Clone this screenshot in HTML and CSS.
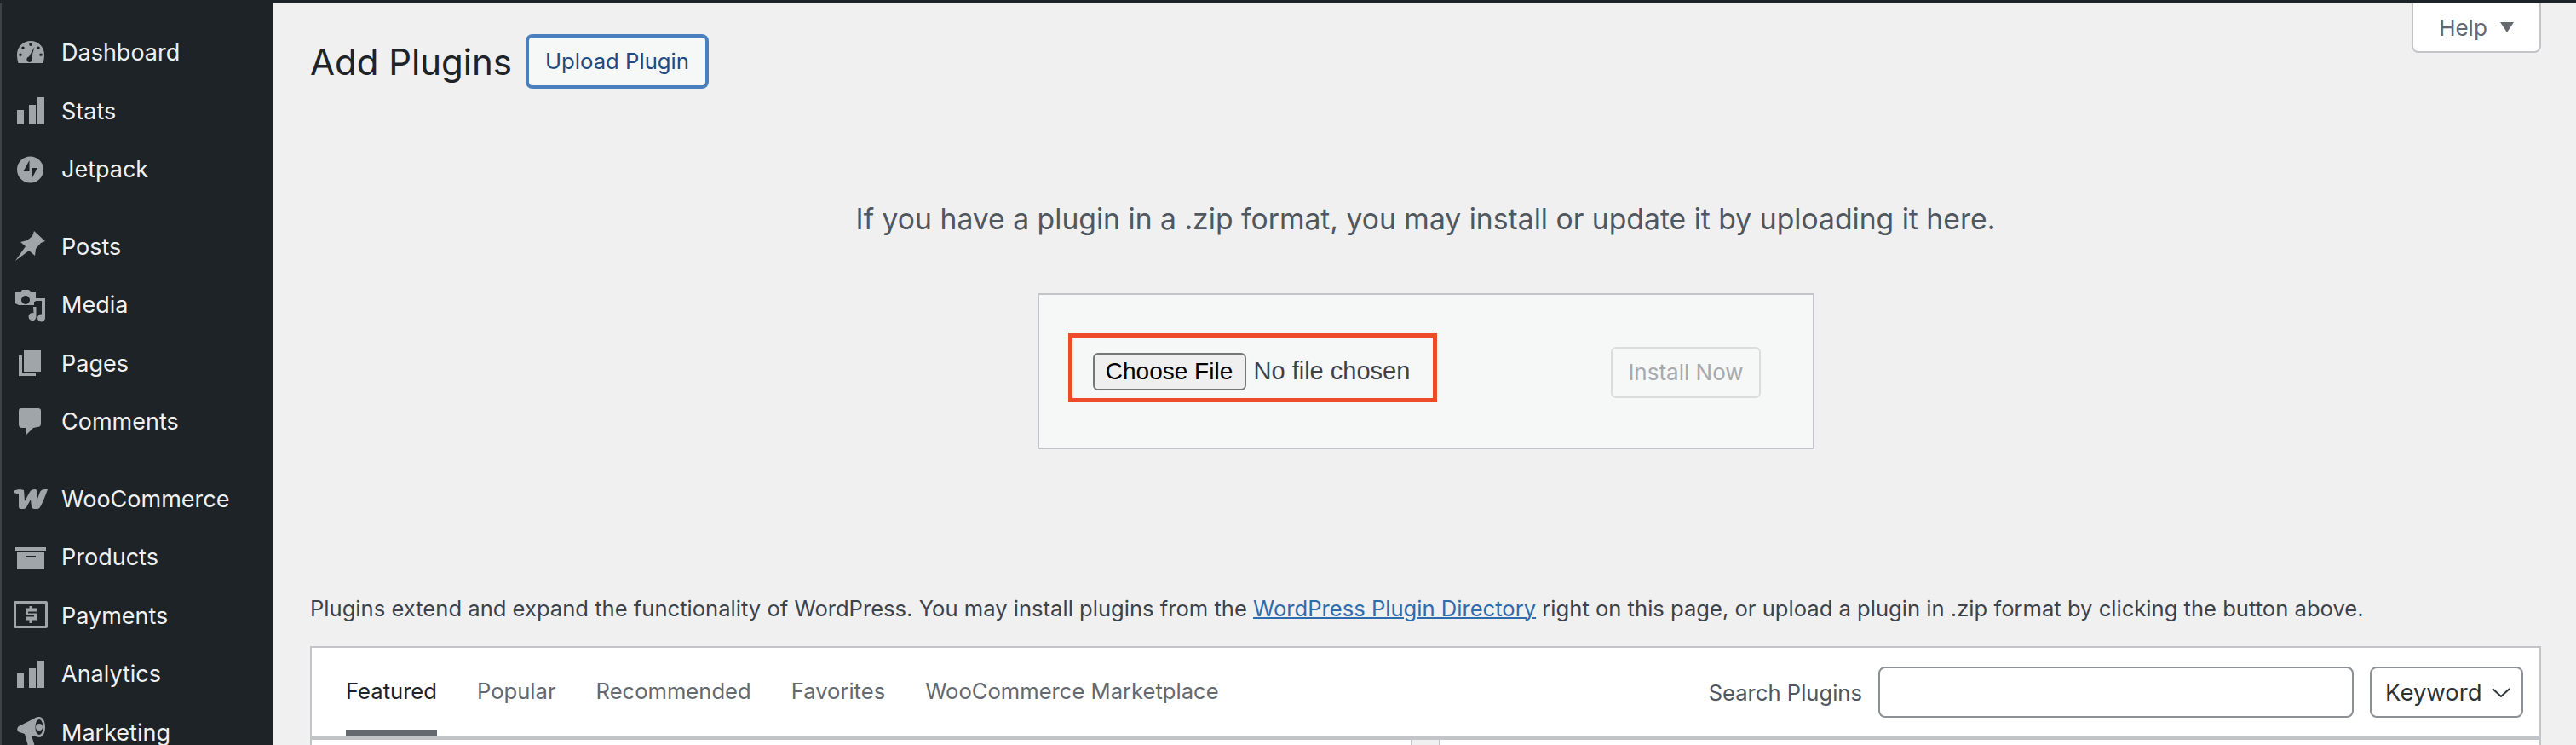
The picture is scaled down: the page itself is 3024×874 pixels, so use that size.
FILE: index.html
```html
<!DOCTYPE html>
<html lang="en">
<head>
  <meta charset="UTF-8">
  <meta name="viewport" content="width=device-width, initial-scale=1.0">
  <title>Add Plugins</title>
  <link rel="stylesheet" href="styles.css">
</head>
<body>
  <div class="topbar"></div>
  <div class="wrap">
    <nav class="sidebar">
      <ul class="menu">
        <li><svg class="icon" viewBox="0 0 40 40"><path fill-rule="evenodd" d="M20 6C11 6 4 13 4 22c0 4 .6 7 1.500 10h29c.9-3 1.500-6 1.500-10 0-9-7-16-16-16zM20 8.500a1.800 1.800 0 1 1 0 3.600 1.800 1.800 0 0 1 0-3.600zM11 12.500a1.800 1.800 0 1 1 0 3.600 1.800 1.800 0 0 1 0-3.600zM29 12.500a1.800 1.800 0 1 1 0 3.600 1.800 1.800 0 0 1 0-3.600zM8 20.500a1.800 1.800 0 1 1 0 3.600 1.800 1.800 0 0 1 0-3.600zM32 20.500a1.800 1.800 0 1 1 0 3.600 1.800 1.800 0 0 1 0-3.600zM24.500 13l-3.500 12.300a3.300 3.300 0 1 1-3-.9z"/></svg>Dashboard</li>
        <li><svg class="icon" viewBox="0 0 40 40"><path d="M4 19h8v17H4zM18 13h8v23h-8zM28 4h8v32h-8z"/></svg>Stats</li>
        <li><svg class="icon" viewBox="0 0 40 40"><path fill-rule="evenodd" d="M19.500 4.500a15.500 15.500 0 1 0 0 31 15.500 15.500 0 0 0 0-31zM18.500 9v13h-7zM21 31V18h7z"/></svg>Jetpack</li>
        <li class="sep"><svg class="icon" viewBox="0 0 40 40"><path d="M24 2l13 12-5 2-6 7-1 8-7-6L2 37l12-17-6-5 8-2 6-5z"/></svg>Posts</li>
        <li><svg class="icon" viewBox="0 0 40 40"><path fill-rule="evenodd" d="M2 5h6l2-3h8l3 3h5v10l-1 1-1 0v4H6L2 18zM14 9a5 5 0 1 0 0 10 5 5 0 0 0 0-10z"/><path d="M25 12h12v23a4.500 4.500 0 1 1-4-4.500V15h-8zM23 22h3.500v11.500a4.500 4.500 0 1 1-3-4.200z"/></svg>Media</li>
        <li><svg class="icon" viewBox="0 0 40 40"><path d="M12 5h20v25H12zM6 11h4v20h16v4H6z"/></svg>Pages</li>
        <li><svg class="icon" viewBox="0 0 40 40"><path d="M9 4h20a3 3 0 0 1 3 3v15a4 4 0 0 1-4 4l-5 1-9 9v-9H10a4 4 0 0 1-4-4V7a3 3 0 0 1 3-3z"/></svg>Comments</li>
        <li class="sep"><svg class="icon" viewBox="0 0 40 40"><path d="M0 11c3-2 9-2 12-1l1 13 6-11c1-2 3-3 6-3 2 0 2 1 2 3v11l4-11c1-2 3-3 6-3h3c-3 8-6 16-9 21-1 2-3 2-5 2s-4 0-5-2l-1-9-5 9c-1 2-3 2-5 2s-4 0-4-3L6 14c-3 0-6 0-6-3z"/></svg>WooCommerce</li>
        <li><svg class="icon" viewBox="0 0 40 40"><path fill-rule="evenodd" d="M2 8h36v4H2zM4 13h32v21H4zM14 18v2h12v-2z"/></svg>Products</li>
        <li><svg class="icon" viewBox="0 0 40 40"><path fill-rule="evenodd" d="M2 3h36a2 2 0 0 1 2 2v28a2 2 0 0 1-2 2H2a2 2 0 0 1-2-2V5a2 2 0 0 1 2-2zM3 7v25h34V7z"/><path d="M18.500 9h3v2.500H27v4H17v2h10v8h-5.500V29h-3v-3.500H14v-4h10v-2H14v-8h4.500z"/></svg>Payments</li>
        <li><svg class="icon" viewBox="0 0 40 40"><path d="M4 19h8v17H4zM18 13h8v23h-8zM28 4h8v32h-8z"/></svg>Analytics</li>
        <li><svg class="icon" viewBox="0 0 40 40"><path fill-rule="evenodd" d="M30 2c4.500 0 7 5.500 7 12s-2.500 12-7 12l-9-2 5 16h-8l-5-18-6-2c-3.500-1-3.500-5-1-7L24 4c2-1.500 4-2 6-2zM30 5c-2.500 0-4.500 4-4.500 9s2 9 4.500 9 4.500-4 4.500-9-2-9-4.500-9zM30 10a4 4 0 1 0 0 8 4 4 0 0 0 0-8z"/></svg>Marketing</li>
      </ul>
    </nav>
    <main class="content">
      <div class="help-tab">Help<span class="help-arrow"></span></div>
      <div class="page-head">
        <h1>Add Plugins</h1>
        <a class="upload-btn" href="#">Upload Plugin</a>
      </div>
      <section class="upload">
        <p class="upload-text">If you have a plugin in a .zip format, you may install or update it by uploading it here.</p>
        <form class="upload-form">
          <div class="file-mark"><input type="file" class="file-input"></div>
          <button type="button" class="install-btn" disabled>Install Now</button>
        </form>
      </section>
      <p class="desc">Plugins extend and expand the functionality of WordPress. You may install plugins from the <a href="#">WordPress Plugin Directory</a> right on this page, or upload a plugin in .zip format by clicking the button above.</p>
      <div class="filter-bar">
        <ul class="tabs">
          <li class="current">Featured</li>
          <li>Popular</li>
          <li>Recommended</li>
          <li>Favorites</li>
          <li>WooCommerce Marketplace</li>
        </ul>
        <form class="search">
          <label for="s">Search Plugins</label>
          <input type="search" id="s" class="search-input">
          <div class="keyword">Keyword<svg viewBox="0 0 22 11"><path d="M1 1l10 9 10-9" fill="none" stroke="#2c3338" stroke-width="2"/></svg></div>
        </form>
      </div>
      <div class="cards">
        <div class="card"></div>
        <div class="card"></div>
      </div>
    </main>
  </div>
</body>
</html>
```

FILE: styles.css
```css
html, body {
  margin: 0;
  height: 874px;
  overflow: hidden;
}
body {
  background: #f0f0f1;
  color: #1d2327;
  font-family: Inter, "Liberation Sans", sans-serif;
  font-size: 28px;
}
.topbar {
  height: 4px;
  background: #1d2327;
}
.wrap {
  display: flex;
  height: 870px;
}
.sidebar {
  width: 318px;
  flex: none;
  background: #1d2327;
  border-left: 2px solid #3c4246;
}
.menu {
  list-style: none;
  margin: 0;
  padding: 23.500px 0 0;
}
.menu li {
  display: flex;
  align-items: center;
  height: 68.500px;
  color: #f0f0f1;
  font-size: 27px;
  gap: 16px;
  padding-left: 14px;
}
.menu li.sep {
  margin-top: 22px;
}
.icon {
  width: 40px;
  height: 40px;
  flex: none;
  fill: #a0a5aa;
}
.content {
  position: relative;
  flex: 1;
  padding: 0 41px 0 44px;
}
.help-tab {
  position: absolute;
  top: 0;
  right: 41px;
  width: 148px;
  height: 56px;
  display: flex;
  align-items: center;
  justify-content: center;
  gap: 15px;
  background: #fff;
  border: 2px solid #c3c4c7;
  border-top: 0;
  border-radius: 0 0 8px 8px;
  color: #646970;
  font-size: 26px;
}
.help-arrow {
  width: 0;
  height: 0;
  border-left: 8px solid transparent;
  border-right: 8px solid transparent;
  border-top: 12px solid #646970;
}
.page-head {
  display: flex;
  align-items: center;
  gap: 16px;
  padding-top: 36px;
}
h1 {
  margin: 0;
  font-size: 42px;
  font-weight: 400;
  line-height: 63px;
}
.upload-btn {
  display: block;
  width: 207px;
  height: 56px;
  line-height: 56px;
  text-align: center;
  background: #f6f7f7;
  border: 4px solid #4a7fbe;
  border-radius: 8px;
  color: #1f4b7f;
  font-size: 25.700px;
  text-decoration: none;
}
.upload {
  display: flex;
  flex-direction: column;
  align-items: center;
}
.upload-text {
  margin: 127px 0 0;
  font-size: 33.700px;
  line-height: 52px;
  color: #50575e;
}
.upload-form {
  box-sizing: border-box;
  width: 912px;
  height: 183px;
  margin-top: 61px;
  display: flex;
  align-items: center;
  justify-content: space-between;
  padding: 0 61px 0 34px;
  background: #f6f7f7;
  border: 2px solid #c3c4c7;
}
.file-mark {
  box-sizing: border-box;
  width: 433px;
  height: 81px;
  margin-bottom: 8px;
  display: flex;
  align-items: center;
  padding: 8px 0 0 24px;
  border: 5px solid #ee4b2b;
}
.file-input {
  font-family: "Liberation Sans", Arial, sans-serif;
  font-size: 29px;
  color: #3c434a;
  width: 400px;
}
.file-input::file-selector-button {
  width: 180px;
  height: 44px;
  margin-right: 9px;
  font: inherit;
  font-size: 28px;
  color: #000;
  background: #efefef;
  border: 2px solid #767676;
  border-radius: 6px;
  padding: 0;
}
.install-btn {
  width: 176px;
  height: 60px;
  margin-top: 2px;
  padding: 0 0 0 1px;
  background: #f6f7f7;
  border: 2px solid #dcdcde;
  border-radius: 6px;
  color: #a7aaad;
  font-family: inherit;
  font-size: 26px;
}
.desc {
  margin: 168px 0 0;
  font-size: 25.600px;
  line-height: 38px;
  color: #3c434a;
  white-space: nowrap;
}
.desc a {
  color: #2f6cad;
  text-decoration-thickness: 2px;
}
.filter-bar {
  box-sizing: border-box;
  height: 110px;
  margin-top: 25px;
  display: flex;
  justify-content: space-between;
  padding: 0 19px 0 40px;
  background: #fff;
  border: 2px solid #c3c4c7;
  border-bottom-width: 4px;
}
.tabs {
  display: flex;
  gap: 47px;
  list-style: none;
  margin: 0;
  padding: 0;
  color: #646970;
  font-size: 25.600px;
}
.tabs li {
  line-height: 101px;
  height: 104px;
  box-sizing: border-box;
}
.tabs .current {
  color: #1d2327;
  border-bottom: 8px solid #646970;
}
.search {
  display: flex;
  align-items: center;
  color: #50575e;
  font-size: 25.600px;
}
.search label {
  margin-right: 19px;
}
.search-input {
  box-sizing: border-box;
  width: 558px;
  height: 60px;
  margin-right: 19px;
  background: #fff;
  border: 2px solid #8c8f94;
  border-radius: 8px;
}
.keyword {
  box-sizing: border-box;
  width: 180px;
  height: 60px;
  display: flex;
  align-items: center;
  justify-content: space-between;
  padding: 0 13px 0 16px;
  border: 2px solid #8c8f94;
  border-radius: 8px;
  color: #2c3338;
  font-size: 27.500px;
}
.keyword svg {
  width: 22px;
  height: 11px;
}
.cards {
  display: grid;
  grid-template-columns: 1fr 1fr;
  gap: 31px;
}
.card {
  height: 10px;
  background: #fff;
  border-left: 2px solid #c3c4c7;
  border-right: 2px solid #c3c4c7;
}
```
